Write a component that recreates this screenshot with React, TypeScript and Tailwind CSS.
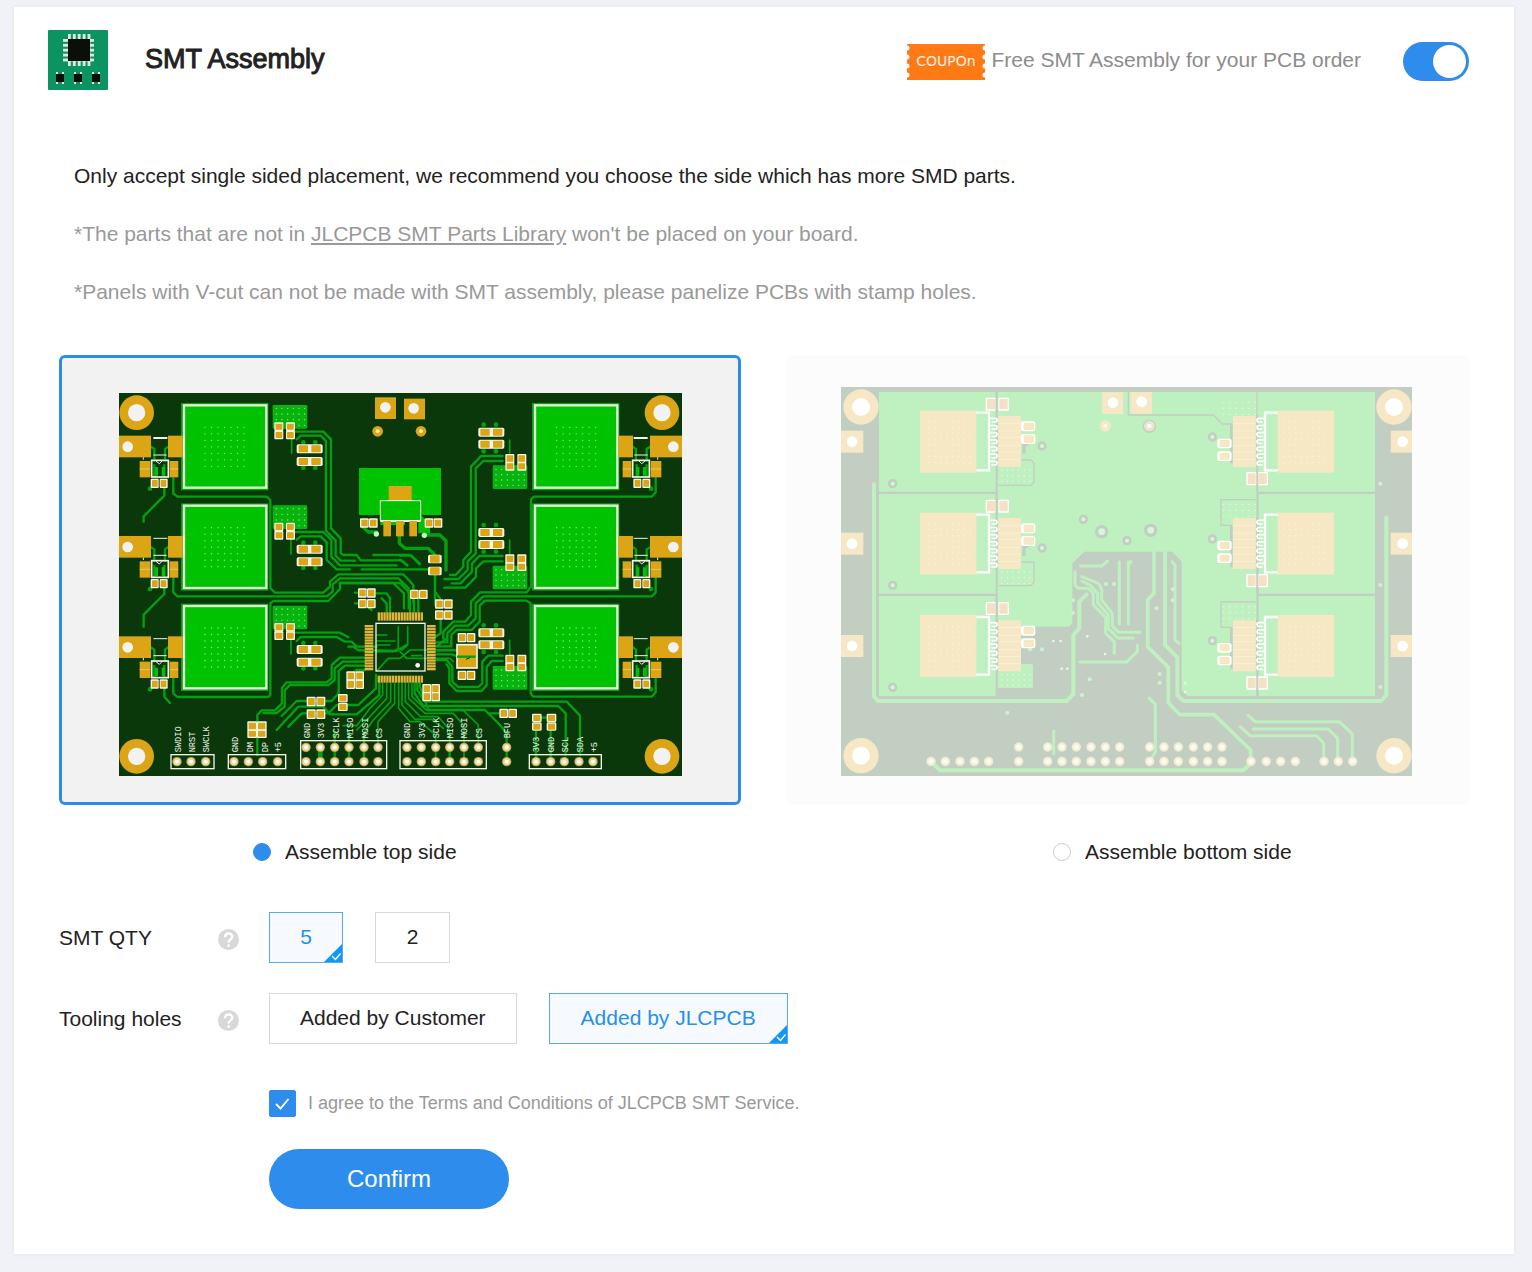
import { useState } from "react";
import type { ReactNode } from "react";

const PAD = "#dba516";
const TRACE = "#04a012";
const FILL = "#00c200";
const SILK = "#f2f5ea";

type Pt = [number, number];

function range(n: number): number[] {
  return Array.from({ length: n }, (_, i) => i);
}

function Dots({ x, y, cols, rows, sx, sy, color, r = 2 }: { x: number; y: number; cols: number; rows: number; sx: number; sy: number; color: string; r?: number }) {
  return (
    <g fill={color}>
      {range(rows).map((j) => range(cols).map((i) => <circle key={`${i}-${j}`} cx={x + i * sx} cy={y + j * sy} r={r} />))}
    </g>
  );
}

function Ring({ x, y, r, h, pad, hole }: { x: number; y: number; r: number; h: number; pad: string; hole: string }) {
  return (
    <g>
      <circle cx={x} cy={y} r={r} fill={pad} />
      <circle cx={x} cy={y} r={h} fill={hole} />
    </g>
  );
}

/* Two small pads side by side inside a silkscreen outline. */
function PadPair({ x, y, w = 21, h = 19, gap = 13, pad = PAD, silk = SILK }: { x: number; y: number; w?: number; h?: number; gap?: number; pad?: string; silk?: string }) {
  return (
    <g>
      <rect x={x - 4} y={y - 4} width={w + 7} height={h + 8} rx={3} fill={silk} />
      <rect x={x + w + gap - 3} y={y - 4} width={w + 7} height={h + 8} rx={3} fill={silk} />
      <rect x={x} y={y} width={w} height={h} rx={2} fill={pad} />
      <rect x={x + w + gap} y={y} width={w} height={h} rx={2} fill={pad} />
    </g>
  );
}

function BigPair({ x, y }: { x: number; y: number }) {
  return (
    <g>
      <rect x={x - 6} y={y - 3} width={78} height={27} rx={5} fill={SILK} />
      <rect x={x} y={y} width={28} height={21} rx={2} fill={PAD} />
      <rect x={x + 38} y={y} width={28} height={21} rx={2} fill={PAD} />
    </g>
  );
}

/* Antenna switch on the left edge; the right edge uses the mirrored copy. */
function EdgeConnector({ last }: { last: boolean }) {
  return (
    <g>
      <g fill="none" stroke={TRACE} strokeWidth={7}>
        <path d="M120 184 L133 192 V230 M176 184 L165 192 V230 M133 238 V276 M163 238 V276" />
        <path d="M120 310 L132 300" />
      </g>
      <path d="M134 246 h10 v26 h-10z M155 246 h10 v26 h-10z" fill={FILL} />
      <circle cx={120} cy={311} r={7} fill={TRACE} />
      <rect x={27} y={152} width={96} height={65} fill={PAD} />
      <rect x={174} y={152} width={44} height={65} fill={PAD} />
      <circle cx={53} cy={185} r={16} fill="#f2f2f2" />
      <path d="M130 159 H172" stroke={SILK} strokeWidth={last ? 3 : 6} />
      <path d="M130 210 H170 M100 217 V224" stroke={SILK} strokeWidth={3} />
      <rect x={89} y={228} width={32} height={49} fill={PAD} />
      <rect x={179} y={228} width={26} height={49} fill={PAD} />
      <path d="M89 252 H121 M179 252 H205" stroke="#f2d98a" strokeWidth={2} />
      <rect x={125} y={226} width={50} height={50} fill="none" stroke={SILK} strokeWidth={5} />
      <path d="M138 228 L148 236 L158 226" fill="none" stroke={SILK} strokeWidth={3} />
      <PadPair x={126} y={285} w={17} h={20} gap={9} />
    </g>
  );
}

function Label({ x, y, children }: { x: number; y: number; children: ReactNode }) {
  return (
    <text transform={`translate(${x} ${y}) rotate(-90)`} fill={SILK} fontSize={26} className="font-['Liberation_Mono',monospace]">
      {children}
    </text>
  );
}

function PinRow({ xs, y }: { xs: number[]; y: number }) {
  return (
    <g>
      {xs.map((x) => (
        <g key={x}>
          <circle cx={x} cy={y} r={14} fill="#c8a243" />
          <circle cx={x} cy={y} r={11} fill="#e9d9a0" />
          <circle cx={x} cy={y} r={6} fill="#ffffff" />
        </g>
      ))}
    </g>
  );
}

const ROWS = [0, 301, 602];

const SMALL_PAIRS: Pt[] = [
  [748, 614], [748, 646], [904, 618], [979, 647], [979, 680], [713, 863], [713, 888], [1047, 748], [1047, 861],
  [941, 901], [941, 925], [1172, 975], [754, 404], [948, 404],
];

const LEFT_PINS = [588, 631, 674, 717, 762, 804];
const RIGHT_PINS = [891, 934, 977, 1019, 1062, 1105];
const BUS = ["GND", "3V3", "SCLK", "MISO", "MOSI", "CS"];

function TopBoard() {
  return (
    <svg viewBox="27 24 1689 1149" className="block h-auto w-full" role="img" aria-label="PCB top side">
      <rect x={27} y={24} width={1689} height={1149} fill="#0a380b" />

      <g fill="none" stroke={TRACE} strokeWidth={7} strokeLinejoin="round" strokeLinecap="round">
        {/* edge returns */}
        <path d="M190 276 V325 L202 335 H470 L481 345 V610 L495 623 H640 L660 605 V590 L685 568 H880 L910 600 V650" />
        <path d="M190 577 V622 L202 634 H650 L668 620 V598 L690 580 H865 L896 610 V670" />
        <path d="M190 875 V925 L202 936 H475 L481 930 V655 L490 648 H655 L690 612 V594 H850 L882 625 V670" />
        <path d="M1637 272 V322 L1625 335 H1272 L1263 343 V605 L1250 622 H1110 L1083 650 V690 L1065 710 H1030 L1000 740 V760" />
        <path d="M1637 574 V622 L1625 634 H1120 L1097 655 V700 L1075 722 H1035 L1012 745 V772 H980" />
        <path d="M1637 874 V922 L1625 935 H1270 L1262 925 V655 L1250 647 H1125 L1109 662 V710 L1085 735 H1040 L1024 750 V784 H980" />
        {/* rf runs */}
        <path d="M163 305 V332 L101 394 V410 M163 606 V627 L101 689 V725 M163 907 V935 L180 954" />
        {/* control lines, upper left */}
        <path d="M545 140 H640 L663 163 V430 L692 460 V505 L700 510 H740 L752 526 H875 L892 541" />
        <path d="M560 163 L572 152 H632 L648 168 V437 L677 467 V512 L692 527 H735" />
        <path d="M545 441 H640 L664 465 V515 L690 541 H860" />
        <path d="M560 464 L572 454 H632 L650 472 V525 L680 553 H720" />
        <path d="M790 510 H900 L930 536 M755 553 H960 L975 570 V620 L990 640" />
        <path d="M545 163 V205 M543 465 V507 M543 765 V807" strokeWidth={5} />
        {/* control lines, upper right */}
        <path d="M1178 213 H1113 L1083 245 V500 L1060 525 V545 L1037 570 H1020" />
        <path d="M1178 228 H1120 L1097 250 V505 L1073 530 V555 L1045 582 H1003" />
        <path d="M1178 513 H1108 L1086 536 V560 L1052 595 H1025" />
        <path d="M1178 529 H1120 L1098 550 V575 L1066 608 H1003" />
        <path d="M1199 165 V205 M1199 465 V507 M1199 766 V807" strokeWidth={5} />
        {/* around the regulator */}
        <path d="M758 425 L775 441 H800 M868 450 V475 L885 490 H955 L975 510 M945 450 H990 L1008 468 V555" strokeWidth={10} />
        <path d="M975 570 V600 M870 512 H905 L928 538 M870 524 L892 541" />
        {/* fan-out above the controller */}
        <path d="M690 612 V594 H870 L900 625 V680 M912 640 V680 M925 640 V680 M840 680 V640 L830 625 H800 M830 680 V655 L815 640" />
        <path d="M975 625 V660 M992 700 V745 L970 760 M735 623 H760 M735 655 H760 L785 675" />
        {/* left of the controller */}
        <path d="M550 743 H690 L715 757 M560 768 L572 756 H680 L705 770 H725 L740 785 H800" />
        <path d="M715 785 H730 L745 796 H800 L860 798 L890 780" />
        <path d="M765 818 H690 L665 840 V880 L650 892 H530 L516 908 V955 L495 976 H455 L442 990 V1110" />
        <path d="M765 830 H698 L674 850 V885 L655 900 H540 L524 916 V965 L500 984 H460" />
        <path d="M765 842 H705 L686 858 V925 L665 948 H560 L515 993 M765 855 H740 L720 870 M798 870 V910 L745 960 H680 L655 985 H575 L535 1025" />
        <path d="M808 895 V930 L740 988 H660 L640 965 H565 L500 1035" />
        {/* inside the controller */}
        <path d="M800 750 H830 M800 768 H855 M800 780 H840 M865 725 V790 L850 800 H800 M893 725 V780 L875 795 M800 858 L835 820 H870 L900 795 H1040 M905 812 H935 M870 800 L890 820 H1020 L1030 830" strokeWidth={5} />
        {/* right of the controller */}
        <path d="M980 808 H1025 L1045 815 M980 825 H1010 L1027 845 V890 L1045 906 H1105 L1117 895 V830 L1135 812 H1178" />
        <path d="M1010 838 L1018 850 V895 L1040 918 H1115 L1130 900 V845 L1145 828 H1178 M980 796 H1040 M980 784 L1010 760" />
        {/* bottom fan-out */}
        <path d="M818 895 V930 L780 970 L740 1022 L700 1022 M830 895 V940 L775 1000 L740 1035 M842 895 V950 L790 1005 L762 1045 V1060 M854 895 V955 L804 1010 V1087" strokeWidth={5} />
        <path d="M866 895 V970 L900 1010 H930 L977 1050 V1130 M876 895 V960 L915 1003 H965 L1000 1030 M886 895 V950 L932 995 H985 L1019 1035 V1130 M896 895 V940 L945 985 H1030 L1062 1022 V1130 M906 895 V935 L950 976 H1060 L1105 1020 V1087" strokeWidth={5} />
        <path d="M914 895 V925 L940 963 H1345 L1367 985 V1110 M922 895 V915 L945 950 H1370 L1410 992 V1110 M930 895 V905 L955 975 H1125 L1170 1020 L1190 1045 V1130" />
        <path d="M1135 985 H1180 M1278 1040 V1130 M1322 1040 V1130 M1278 998 H1310" />
        <path d="M631 1087 V1130" strokeWidth={14} />
        <path d="M674 1040 V1130 M717 1040 V1130 M762 1050 V1130 M1019 1087 V1130" />
      </g>

      {ROWS.map((dy, i) => (
        <g key={dy} transform={`translate(0 ${dy})`}>
          {[213, 1266].map((x) => (
            <g key={x}>
              <rect x={x} y={54} width={262} height={262} fill="#06a40c" />
              <rect x={x + 9} y={61} width={247} height={247} fill={FILL} stroke="#e4f8dc" strokeWidth={7} />
              <Dots x={x === 213 ? 285 : 1340} y={127} cols={7} rows={7} sx={19.5} sy={19.5} color="#9bf096" r={2} />
            </g>
          ))}
          <rect x={488} y={60} width={104} height={71} rx={4} fill="#07b40d" />
          <Dots x={499} y={70} cols={6} rows={4} sx={17} sy={17} color="#9bea98" />
          <rect x={1148} y={241} width={104} height={71} rx={4} fill="#07b40d" />
          <Dots x={1158} y={253} cols={6} rows={4} sx={17} sy={16} color="#9bea98" />
          <PadPair x={497} y={116} w={20} h={18} gap={14} />
          <PadPair x={497} y={141} w={20} h={18} gap={14} />
          <PadPair x={1190} y={211} w={20} h={19} gap={15} />
          <PadPair x={1190} y={235} w={20} h={18} gap={15} />
          {[580, 616].map((x) => [172, 248].map((y) => <circle key={`${x}${y}`} cx={x} cy={y} r={7} fill={TRACE} />))}
          {[1121, 1158].map((x) => [119, 199].map((y) => <circle key={`${x}${y}`} cx={x} cy={y} r={7} fill={TRACE} />))}
          <BigPair x={566} y={181} />
          <BigPair x={566} y={219} />
          <BigPair x={1111} y={131} />
          <BigPair x={1111} y={167} />
          <EdgeConnector last={i > 0} />
          <g transform="translate(1743 0) scale(-1 1)">
            <EdgeConnector last={i > 0} />
          </g>
        </g>
      ))}

      {/* mounting holes */}
      {[80, 1656].map((x) => [83, 1114].map((y) => <Ring key={`${x}${y}`} x={x} y={y} r={52} h={26} pad={PAD} hole="#f2f2f2" />))}

      {/* power input */}
      <rect x={795} y={37} width={63} height={65} fill={PAD} />
      <rect x={882} y={41} width={63} height={62} fill={PAD} />
      <circle cx={826} cy={67} r={16} fill="#f2f2f2" />
      <circle cx={911} cy={70} r={16} fill="#f2f2f2" />
      <Ring x={803} y={139} r={16} h={6} pad={PAD} hole="#f8edc4" />
      <Ring x={933} y={139} r={16} h={6} pad={PAD} hole="#f8edc4" />

      {/* voltage regulator */}
      <path d="M747 249 H993 V390 H747 Z" fill={FILL} />
      <path d="M811 388 H885 V420 H811 Z M885 388 H932 L960 420 V445 H925 V408 H885 Z" fill={FILL} />
      <rect x={836} y={303} width={69} height={45} fill={PAD} />
      <path d="M811 408 V347 H932 V408" fill="none" stroke={SILK} strokeWidth={3} />
      <path d="M811 408 H932" stroke={SILK} strokeWidth={6} />
      {[820, 858, 898].map((x) => (
        <rect key={x} x={x} y={408} width={23} height={46} fill={PAD} />
      ))}
      <circle cx={799} cy={447} r={8} fill="#c7f5c7" />
      <circle cx={943} cy={451} r={8} fill="#c7f5c7" />
      {[511, 547].map((y) => (
        <g key={y}>
          <rect x={954} y={y - 2} width={41} height={26} rx={5} fill={SILK} />
          <rect x={960} y={y} width={29} height={22} rx={2} fill={PAD} />
        </g>
      ))}

      {SMALL_PAIRS.map(([x, y]) => (
        <PadPair key={`${x}-${y}`} x={x} y={y} w={19} h={20} gap={7} />
      ))}
      <PadPair x={594} y={939} w={20} h={21} gap={8} />
      <PadPair x={594} y={977} w={20} h={21} gap={8} />
      <PadPair x={416} y={1013} w={22} h={20} gap={6} />
      <PadPair x={416} y={1038} w={22} h={17} gap={6} />
      {[[687, 930], [1269, 989], [1313, 989]].map(([x, y]) => (
        <g key={x}>
          <rect x={x - 3} y={y - 3} width={29} height={25} rx={4} fill={SILK} />
          <rect x={x - 3} y={y + 23} width={29} height={25} rx={4} fill={SILK} />
          <rect x={x + 1} y={y + 1} width={21} height={18} fill={PAD} />
          <rect x={x + 1} y={y + 27} width={21} height={18} fill={PAD} />
        </g>
      ))}

      {/* crystal */}
      <rect x={1041} y={779} width={60} height={70} fill={PAD} stroke={SILK} strokeWidth={5} />
      <path d="M1041 815 H1097" stroke={TRACE} strokeWidth={7} />
      <path d="M1068 823 L1080 818" stroke="#0a380b" strokeWidth={3} />

      {/* controller */}
      <rect x={798} y={715} width={147} height={143} fill="none" stroke={SILK} strokeWidth={4} />
      <circle cx={923} cy={841} r={7} fill="#ffffff" />
      {range(16).map((i) => (
        <g key={i} fill="#e0b53c">
          <rect x={803 + i * 8.6} y={682} width={7} height={25} />
          <rect x={803 + i * 8.6} y={872} width={7} height={21} />
          <rect x={764} y={720 + i * 8.6} width={26} height={7} />
          <rect x={951} y={720 + i * 8.6} width={26} height={7} />
        </g>
      ))}

      {/* pin headers */}
      <g fill="none" stroke={SILK} strokeWidth={4}>
        <rect x={183} y={1109} width={129} height={42} />
        <rect x={355} y={1109} width={172} height={42} />
        <rect x={572} y={1067} width={258} height={84} />
        <rect x={870} y={1067} width={259} height={84} />
        <rect x={1258} y={1109} width={216} height={42} />
      </g>
      <PinRow xs={[201, 243, 287, 372, 415, 458, 503]} y={1130} />
      <PinRow xs={LEFT_PINS} y={1087} />
      <PinRow xs={LEFT_PINS} y={1130} />
      <PinRow xs={RIGHT_PINS} y={1087} />
      <PinRow xs={RIGHT_PINS} y={1130} />
      <PinRow xs={[1190]} y={1087} />
      <PinRow xs={[1190, 1278, 1322, 1363, 1407, 1449]} y={1130} />
      <Label x={212} y={1102}>SWDIO</Label>
      <Label x={254} y={1102}>NRST</Label>
      <Label x={298} y={1102}>SWCLK</Label>
      <Label x={385} y={1102}>GND</Label>
      <Label x={430} y={1102}>DM</Label>
      <Label x={473} y={1102}>DP</Label>
      <Label x={514} y={1102}>+5</Label>
      {BUS.map((t, i) => (
        <g key={t}>
          <Label x={LEFT_PINS[i] + 12} y={1060}>{t}</Label>
          <Label x={RIGHT_PINS[i] + 10} y={1060}>{t}</Label>
        </g>
      ))}
      <Label x={1201} y={1060}>BFU</Label>
      <Label x={1288} y={1102}>3V3</Label>
      <Label x={1333} y={1102}>GND</Label>
      <Label x={1374} y={1102}>SCL</Label>
      <Label x={1418} y={1102}>SDA</Label>
      <Label x={1461} y={1102}>+5</Label>
    </svg>
  );
}

const B_BASE = "#c3cec3";
const B_GREEN = "#bff0bf";
const B_PAD = "#f6e8c5";

function Teeth({ x, y }: { x: number; y: number }) {
  return (
    <g fill="none">
      <path d={`M${x + 23} ${y - 10} V${y + 145}`} stroke={B_BASE} strokeWidth={7} />
      {range(7).map((i) => (
        <path key={i} d={`M${x} ${y + i * 21.5} h19 q5 0 5 5 q0 6 -5 6 h-12`} stroke="#ffffff" strokeWidth={5} />
      ))}
    </g>
  );
}

function PowerStage() {
  return (
    <g>
      <rect x={255} y={92} width={169} height={186} fill={B_PAD} />
      <Dots x={283} y={125} cols={8} rows={8} sx={17.5} sy={17.5} color="#fbf5e2" />
      <path d="M424 98 H462 V271 H424" fill="none" stroke="#ffffff" strokeWidth={7} />
      <Teeth x={462} y={115} />
      <rect x={490} y={108} width={68} height={153} fill={B_PAD} />
      <path d="M490 130 H558 M490 153 H558 M490 172 H558 M490 196 H558 M490 216 H558 M490 238 H558" stroke="#fbf5e2" strokeWidth={2} />
    </g>
  );
}

function BottomPins({ xs, y }: { xs: number[]; y: number }) {
  return (
    <g>
      {xs.map((x) => (
        <Ring key={x} x={x} y={y} r={14} h={8} pad="#f1ecd3" hole="#fbfaf0" />
      ))}
    </g>
  );
}

const VIAS: Pt[] = [
  [621, 198], [621, 504], [173, 311], [173, 616], [173, 922], [745, 418], [800, 455], [876, 482], [947, 451],
  [1132, 171], [1132, 477], [1132, 782], [943, 139],
];

const SMALL_VIAS: Pt[] = [
  [764, 898], [741, 945], [517, 998], [585, 808], [621, 808], [974, 882], [974, 908], [964, 685], [1013, 628], [1013, 661],
  [1636, 311], [1636, 615], [1636, 921], [714, 661], [714, 698], [813, 612], [837, 612],
];

function BottomBoard() {
  return (
    <svg viewBox="18 21 1713 1167" className="block h-auto w-full" role="img" aria-label="PCB bottom side">
      <rect x={18} y={21} width={1713} height={1167} fill={B_BASE} />
      <g fill={B_GREEN}>
        <rect x={132} y={36} width={350} height={299} />
        <rect x={132} y={342} width={350} height={299} />
        <rect x={132} y={648} width={350} height={300} />
        <rect x={1268} y={36} width={352} height={299} />
        <rect x={1271} y={342} width={349} height={299} />
        <rect x={1271} y={648} width={349} height={300} />
        <path d="M488 36 H1264 V948 H1057 L1040 930 V545 L1012 515 H748 L712 550 V730 L702 740 H488 Z" />
        <rect x={488} y={852} width={106} height={72} rx={5} />
      </g>

      <g fill="none" stroke={B_BASE} strokeWidth={4}>
        <path d="M490 240 H588 L597 250 V306 L588 316 H490 M490 546 H597 V606 L588 617 H490" />
        <path d="M880 36 V105 H1135 L1162 132 H1190 M1262 359 H1158 V436 H1190 M1262 666 H1158 V742 H1190" />
        <path d="M1189 130 V250 M1189 436 V560 M1189 742 V866" strokeWidth={8} />
      </g>
      <path d="M562 185 h18 v12 h-8 v24 h-10z M562 492 h18 v12 h-8 v24 h-10z" fill={B_BASE} />

      {VIAS.map(([x, y]) => (
        <g key={`${x}-${y}`}>
          <circle cx={x} cy={y} r={x > 790 && x < 960 && y < 460 ? 20 : 14} fill={B_BASE} />
          <circle cx={x} cy={y} r={x > 790 && x < 960 && y < 460 ? 10 : 6} fill="#daf6da" />
        </g>
      ))}

      <g fill="none" stroke={B_GREEN} strokeWidth={9} strokeLinecap="round" strokeLinejoin="round">
        <path d="M117 312 V950 L130 963 H695 L715 942 V765 L733 745 V665 L755 643" strokeWidth={12} />
        <path d="M1654 412 V945 L1638 963 H1045 L1027 945 V832 L990 795 V515" strokeWidth={12} />
        <path d="M957 515 V640 L938 660 V800 L1000 862 V968 L1035 1004 H1137 L1247 1110 V1140" strokeWidth={11} />
        <path d="M288 1145 L315 1171 H1225 L1250 1148" strokeWidth={12} />
        <path d="M737 558 H800 L818 543 M720 575 V615 L730 625 H760 L775 640 V675 L812 712 V760 L838 785 V820" />
        <path d="M740 590 L790 610 L800 628 V660 L832 700 V738 L850 757 H915 M740 603 L765 615 L788 640 V668 L820 705 V745 L848 774 H895" />
        <path d="M853 545 V732 M880 545 V732 M735 846 H875 L907 815 V795" />
        <path d="M888 545 L880 555 M1020 555 V780 L1032 790 M1011 545 L1020 555 M990 560 V790 M656 1053 V1120" />
        <path d="M943 955 L961 973 V1115 L950 1135 M1240 1006 L1260 1025 H1513 L1552 1062 V1140 M1255 1047 H1480 L1508 1075 V1140 M1216 1040 L1245 1067 H1445 L1466 1090 V1140" />
      </g>
      {SMALL_VIAS.map(([x, y]) => (
        <circle key={`${x}-${y}`} cx={x} cy={y} r={6} fill="#cdf3cd" />
      ))}
      <g fill="#e6f7e6">
        {[[655, 783], [677, 783], [680, 866], [697, 866], [757, 769], [810, 822], [1050, 910], [1050, 936]].map(([x, y]) => (
          <circle key={`${x}${y}`} cx={x} cy={y} r={4} />
        ))}
      </g>

      {[0, 306, 613].map((dy) => (
        <g key={dy} transform={`translate(0 ${dy})`}>
          <Dots x={500} y={270} cols={6} rows={3} sx={17} sy={17} color="#e9fbe9" />
          <Dots x={1166} y={67} cols={6} rows={3} sx={19} sy={18} color="#e9fbe9" />
          <PowerStage />
          <g transform="translate(1752 0) scale(-1 1)">
            <PowerStage />
          </g>
          <PadPair x={456} y={57} w={25} h={31} gap={12} pad="#f6e0c5" silk="#ffffff" />
          <path d="M485 36 V100" stroke={B_BASE} strokeWidth={7} />
          <PadPair x={1238} y={280} w={24} h={32} gap={9} pad="#f6e0c5" silk="#ffffff" />
          <path d="M1267 265 V335" stroke={B_BASE} strokeWidth={6} />
          {[128, 166].map((y) => (
            <g key={y}>
              <rect x={558} y={y - 4} width={43} height={30} rx={7} fill="#ffffff" />
              <rect x={566} y={y} width={31} height={22} rx={3} fill={B_PAD} />
            </g>
          ))}
          {[180, 218].map((y) => (
            <g key={y}>
              <rect x={1147} y={y - 4} width={43} height={29} rx={7} fill="#ffffff" />
              <rect x={1154} y={y} width={30} height={21} rx={3} fill={B_PAD} />
            </g>
          ))}
          <rect x={18} y={152} width={67} height={66} fill={B_PAD} />
          <circle cx={51} cy={185} r={16} fill="#ffffff" />
          <rect x={1667} y={152} width={64} height={66} fill={B_PAD} />
          <circle cx={1703} cy={185} r={16} fill="#ffffff" />
        </g>
      ))}

      {[78, 1677].map((x) => [81, 1127].map((y) => <Ring key={`${x}${y}`} x={x} y={y} r={53} h={27} pad={B_PAD} hole="#ffffff" />))}
      <rect x={801} y={37} width={63} height={65} fill={B_PAD} />
      <rect x={887} y={36} width={64} height={65} fill={B_PAD} />
      <circle cx={834} cy={68} r={16} fill="#ffffff" />
      <circle cx={920} cy={65} r={16} fill="#ffffff" />
      <Ring x={811} y={138} r={17} h={6} pad={B_PAD} hole="#ffffff" />
      <Ring x={943} y={138} r={16} h={7} pad="#efe2c8" hole="#ffffff" />

      <BottomPins xs={[551, 638, 681, 724, 768, 811, 854, 944, 987, 1030, 1075, 1118, 1161]} y={1101} />
      <BottomPins xs={[288, 331, 375, 418, 461, 551, 638, 681, 724, 768, 811, 854, 944, 987, 1030, 1075, 1118, 1161, 1248, 1294, 1337, 1381, 1467, 1510, 1553]} y={1144} />
    </svg>
  );
}

function AssemblyIcon() {
  return (
    <svg viewBox="0 0 60 60" className="h-[60px] w-[60px] shrink-0" aria-hidden="true">
      <rect width="60" height="60" rx="1" fill="#0b9461" />
      <g fill="#dfe9e0">
        {range(5).map((i) => (
          <g key={i}>
            <rect x={20 + i * 4.9} y={4} width={2.8} height={32} />
            <rect x={15} y={9 + i * 4.9} width={31} height={2.8} />
          </g>
        ))}
        {[8, 26, 44].map((x) => (
          <path key={x} d={`M${x} 42 h2 v12 h-2z M${x + 6} 42 h2 v12 h-2z`} />
        ))}
      </g>
      <rect x="20" y="9" width="22" height="22" fill="#0b0f0c" />
      {[8, 26, 44].map((x) => (
        <rect key={x} x={x} y={44} width={8} height={8} fill="#0b0f0c" />
      ))}
    </svg>
  );
}

function Coupon() {
  return (
    <svg viewBox="0 0 78 36" className="h-9 w-[78px] shrink-0" role="img" aria-label="Coupon">
      <rect width="78" height="36" fill="#ff7a14" />
      {[4, 13, 22, 31].map((y) => (
        <g key={y} fill="#ffffff">
          <circle cx="0" cy={y} r="2.5" />
          <circle cx="78" cy={y} r="2.5" />
        </g>
      ))}
      <text x="39" y="22" textAnchor="middle" fontSize="14" fill="#fff3e4" className="font-['DejaVu_Sans',sans-serif]">
        COUPOn
      </text>
    </svg>
  );
}

function HelpIcon({ label }: { label: string }) {
  return (
    <button type="button" aria-label={label} className="mt-[3px] flex size-[21px] items-center justify-center rounded-full bg-[#d8d8d8]">
      <svg viewBox="0 0 21 21" className="size-[21px]" fill="none" stroke="#ffffff" strokeWidth="2.4" aria-hidden="true">
        <path d="M7 8.2 C7 3.2 14.4 3.4 14.2 7.8 C14 10.4 10.6 10.4 10.6 13.6" />
        <circle cx="10.6" cy="16.6" r="0.7" fill="#ffffff" strokeWidth="1.4" />
      </svg>
    </button>
  );
}

function Option({ selected, onClick, className, children }: { selected: boolean; onClick: () => void; className: string; children: ReactNode }) {
  return (
    <button
      type="button"
      aria-pressed={selected}
      onClick={onClick}
      className={`relative h-[51px] border pb-px ${className} ${selected ? "border-[#59a8ee] bg-[#f6faff] text-[#2390f0]" : "border-[#d9d9d9] bg-white text-[#222222]"}`}
    >
      {children}
      {selected && (
        <svg viewBox="0 0 18 18" className="absolute right-0 bottom-0 size-[18px]" aria-hidden="true">
          <path d="M18 0 V18 H0 Z" fill="#1296f8" />
          <path d="M8 12 L11.5 15.5 L16.5 9.5" fill="none" stroke="#ffffff" strokeWidth="1.4" />
        </svg>
      )}
    </button>
  );
}

type Side = "top" | "bottom";

export default function App() {
  const [enabled, setEnabled] = useState(true);
  const [side, setSide] = useState<Side>("top");
  const [qty, setQty] = useState(5);
  const [holes, setHoles] = useState("jlcpcb");
  const [agree, setAgree] = useState(true);

  const frame = (s: Side) => (side === s ? "border-[#2d8cea] bg-[#f2f2f2]" : "border-transparent bg-[#fcfcfc]");
  const radio = "size-[18px] appearance-none rounded-full border border-[#cccccc] bg-white checked:border-[#2d8cec] checked:bg-[#2d8cec]";

  return (
    <div className="bg-[#f0f2f7] pt-[7px] pr-[18px] pb-[18px] pl-[14px] font-['Liberation_Sans',Arial,sans-serif] text-[21px] leading-7 text-[#222222]">
      <main className="bg-white px-[45px] pt-[23px] pb-[45px] shadow-[0_0_4px_#dfe3ea]">
        <header className="-ml-[11px] flex items-center">
          <AssemblyIcon />
          <h1 className="ml-[37px] pb-[2px] text-[27px] font-normal [-webkit-text-stroke:1px_#222222]">SMT Assembly</h1>
          <div className="ml-auto flex items-center pt-[3px]">
            <Coupon />
            <label htmlFor="smt-enabled" className="ml-[6px] pb-[3px] text-[#8c8c8c]">
              Free SMT Assembly for your PCB order
            </label>
            <input
              id="smt-enabled"
              type="checkbox"
              role="switch"
              checked={enabled}
              onChange={(e) => setEnabled(e.target.checked)}
              className="ml-[42px] flex h-[39px] w-[66px] appearance-none items-center rounded-full bg-[#cccccc] p-[3px] before:size-[33px] before:rounded-full before:bg-white before:content-[''] checked:justify-end checked:bg-[#2d8cec]"
            />
          </div>
        </header>

        <div className="mt-[72px] flex flex-col gap-[30px] pl-[15px] text-[#999999]">
          <p className="text-[#222222]">Only accept single sided placement, we recommend you choose the side which has more SMD parts.</p>
          <p>
            *The parts that are not in{" "}
            <a href="#parts" className="underline">
              JLCPCB SMT Parts Library
            </a>{" "}
            won't be placed on your board.
          </p>
          <p>*Panels with V-cut can not be made with SMT assembly, please panelize PCBs with stamp holes.</p>
        </div>

        <div className="mt-[49px] grid grid-cols-2 gap-x-[46px]">
          <div>
            <label htmlFor="side-top" className={`flex rounded-md border-3 pt-[35px] pr-[56px] pb-[26px] pl-[57px] ${frame("top")}`}>
              <TopBoard />
            </label>
            <div className="mt-[33px] flex items-center gap-[14px] pl-[194px]">
              <input id="side-top" type="radio" name="side" checked={side === "top"} onChange={() => setSide("top")} className={radio} />
              <label htmlFor="side-top">Assemble top side</label>
            </div>
          </div>
          <div>
            <label htmlFor="side-bottom" className={`flex rounded-md border-3 pt-[29px] pr-[54px] pb-[26px] pl-[51px] ${frame("bottom")}`}>
              <BottomBoard />
            </label>
            <div className="mt-[33px] flex items-center gap-[14px] pl-[266px]">
              <input id="side-bottom" type="radio" name="side" checked={side === "bottom"} onChange={() => setSide("bottom")} className={radio} />
              <label htmlFor="side-bottom">Assemble bottom side</label>
            </div>
          </div>
        </div>

        <div className="mt-[46px] grid grid-cols-[210px_1fr] gap-y-[30px]">
          <div className="flex items-center justify-between pr-[30px]">
            <span>SMT QTY</span>
            <HelpIcon label="About SMT quantity" />
          </div>
          <div className="flex gap-8">
            <Option selected={qty === 5} onClick={() => setQty(5)} className="w-[74px]">
              5
            </Option>
            <Option selected={qty === 2} onClick={() => setQty(2)} className="w-[75px]">
              2
            </Option>
          </div>
          <div className="flex items-center justify-between pr-[30px]">
            <span>Tooling holes</span>
            <HelpIcon label="About tooling holes" />
          </div>
          <div className="flex gap-8">
            <Option selected={holes === "customer"} onClick={() => setHoles("customer")} className="px-[30px]">
              Added by Customer
            </Option>
            <Option selected={holes === "jlcpcb"} onClick={() => setHoles("jlcpcb")} className="px-[31px]">
              Added by JLCPCB
            </Option>
          </div>
        </div>

        <div className="mt-[46px] pl-[210px]">
          <div className="flex items-center gap-3">
            <span className="grid size-[27px]">
              <input
                id="agree"
                type="checkbox"
                checked={agree}
                onChange={(e) => setAgree(e.target.checked)}
                className="peer col-start-1 row-start-1 size-[27px] appearance-none rounded-xs border border-[#cccccc] bg-white checked:border-[#2d8cec] checked:bg-[#2d8cec]"
              />
              <svg viewBox="0 0 27 27" className="pointer-events-none invisible col-start-1 row-start-1 size-[27px] peer-checked:visible" fill="none" stroke="#ffffff" strokeWidth="1.9" aria-hidden="true">
                <path d="M7 14 L11.5 18.5 L19.5 9" />
              </svg>
            </span>
            <label htmlFor="agree" className="text-[18px] leading-[27px] text-[#999999]">
              I agree to the Terms and Conditions of JLCPCB SMT Service.
            </label>
          </div>
          <button type="button" className="mt-8 h-[60px] w-[240px] rounded-full bg-[#2d8cec] text-2xl text-white">
            Confirm
          </button>
        </div>
      </main>
    </div>
  );
}
